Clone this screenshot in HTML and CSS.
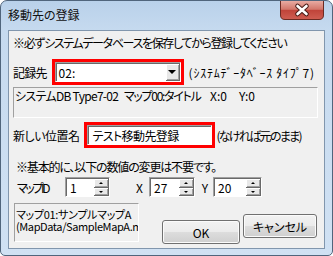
FILE: index.html
```html
<!DOCTYPE html>
<html lang="ja">

<head>
    <meta charset="UTF-8">
    <title>移動先の登録</title>
    <link rel="stylesheet" href="styles.css">
</head>

<body>
    <div class="window">
        <div class="titlebar">
            <span class="title">移動先の登録</span>
            <svg class="close" width="44" height="19" viewBox="0 0 44 19">
                <defs>
                    <linearGradient id="closeGrad" x1="0" y1="0" x2="0" y2="1">
                        <stop offset="0" stop-color="#e8aba2"/>
                        <stop offset="0.45" stop-color="#d2766a"/>
                        <stop offset="0.5" stop-color="#c0443a"/>
                        <stop offset="1" stop-color="#cf5e52"/>
                    </linearGradient>
                </defs>
                <path d="M0.5 0 V14 Q0.5 18.5 5 18.5 H39 Q43.5 18.5 43.5 14 V0" fill="url(#closeGrad)" stroke="#6b2a22"/>
                <path d="M17.5 5 L26.5 13 M26.5 5 L17.5 13" stroke="#4a1d18" stroke-width="4.6" stroke-linecap="round"/>
                <path d="M17.5 5 L26.5 13 M26.5 5 L17.5 13" stroke="#ffffff" stroke-width="2.6" stroke-linecap="round"/>
            </svg>
        </div>

        <div class="client">
            <p class="note note-top">※必ずシステムデータベースを保存してから登録してください</p>

            <div class="row row-db">
                <span class="label">記録先</span>
                <div class="redbox">
                    <div class="combo">
                        <span class="combo-val">02:</span>
                        <span class="combo-btn"><i class="arrow-down"></i></span>
                    </div>
                </div>
                <span class="hint hint-db">(ｼｽﾃﾑﾃﾞｰﾀﾍﾞｰｽ ﾀｲﾌﾟ7)</span>
            </div>

            <div class="info info-db">
                <span class="seg seg-db">システムDB Type7-02</span>
                <span class="seg seg-map">マップ00:タイトル</span>
                <span class="seg seg-x">X:0</span>
                <span class="seg">Y:0</span>
            </div>

            <div class="row row-name">
                <span class="label label-name">新しい位置名</span>
                <div class="redbox">
                    <div class="textbox">テスト移動先登録</div>
                </div>
                <span class="hint hint-name">(なければ元のまま)</span>
            </div>

            <p class="note note-mid">※基本的に、以下の数値の変更は不要です。</p>

            <div class="row row-spin">
                <span class="spin-label">マップID</span>
                <div class="spin spin-id">
                    <span class="spin-val">1</span>
                    <span class="spin-btns"><i class="up"></i><i class="down"></i></span>
                </div>
                <span class="axis axis-x">X</span>
                <div class="spin spin-x">
                    <span class="spin-val">27</span>
                    <span class="spin-btns"><i class="up"></i><i class="down"></i></span>
                </div>
                <span class="axis axis-y">Y</span>
                <div class="spin spin-y">
                    <span class="spin-val">20</span>
                    <span class="spin-btns"><i class="up"></i><i class="down"></i></span>
                </div>
            </div>

            <div class="bottom">
                <div class="info info-map">
                    <div class="map-name">マップ01:サンプルマップA</div>
                    <div class="map-file">(MapData/SampleMapA.m</div>
                </div>
                <button class="btn btn-ok">OK</button>
                <button class="btn btn-cancel">キャンセル</button>
            </div>
        </div>
    </div>
</body>

</html>
```

FILE: styles.css
```css
body {
    margin: 0;
    font-family: "Noto Sans CJK JP", "Noto Sans", sans-serif;
    font-size: 12px;
    font-feature-settings: "palt";
    color: #000;
}

.window {
    width: 333px;
    height: 256px;
    box-sizing: border-box;
    border: 1px solid #50657c;
    border-radius: 7px 7px 5px 5px;
    background: linear-gradient(#b9d1ea, #c6daef 30px, #d0e1f3);
    padding: 0 7px 6px;
    display: flex;
    flex-direction: column;
    overflow: hidden;
}

.titlebar {
    height: 29px;
    flex: none;
    display: flex;
    justify-content: space-between;
    align-items: flex-start;
}

.title {
    padding-top: 7px;
    line-height: 14px;
    color: #111;
}

.close {
    display: block;
    margin-right: 1px;
}

.client {
    flex: 1;
    border: 1px solid #8196ad;
    background: #f0f0f0;
    padding: 0 4px;
}

.note {
    margin: 0;
    line-height: 14px;
    white-space: nowrap;
}

.note-top {
    margin-top: 5px;
    letter-spacing: -1.35px;
}

.note-mid {
    margin-top: 12px;
    padding-left: 3px;
    letter-spacing: -1.15px;
}

.row {
    display: flex;
    align-items: center;
    white-space: nowrap;
}

.label {
    letter-spacing: -0.8px;
}

.label-name {
    letter-spacing: -0.5px;
}

.row-db {
    margin-top: 9px;
    gap: 5px;
}

.row-name {
    margin-top: 4px;
    gap: 5px;
}

.hint-db {
    margin-left: 0;
    letter-spacing: 0.75px;
}

.hint-name {
    margin-left: -4px;
    letter-spacing: -1.7px;
}

.redbox {
    border: 3px solid #ff0000;
}

.combo {
    width: 126px;
    height: 20px;
    box-sizing: border-box;
    display: flex;
    background: #fff;
    border: 1px solid;
    border-color: #a0a0a0 #ffffff #ffffff #a0a0a0;
    box-shadow: inset 1px 1px 0 #696969;
}

.combo-val {
    flex: 1;
    padding: 1px 0 0 3px;
    line-height: 17px;
}

.combo-btn {
    width: 14px;
    margin: 1px 0 0;
    box-sizing: border-box;
    background: #e8e8e8;
    border-right: 1px solid #696969;
    border-bottom: 1px solid #696969;
    box-shadow: inset 1px 1px 0 #fff, inset -1px -1px 0 #a0a0a0;
    display: flex;
    align-items: center;
    justify-content: center;
}

.arrow-down {
    display: block;
    border-left: 4px solid transparent;
    border-right: 4px solid transparent;
    border-top: 4px solid #000;
}

.textbox {
    width: 125px;
    height: 20px;
    box-sizing: border-box;
    background: #fff;
    border: 1px solid;
    border-color: #a0a0a0 #ffffff #ffffff #a0a0a0;
    box-shadow: inset 1px 1px 0 #696969;
    padding: 1px 0 0 4px;
    line-height: 17px;
    letter-spacing: -0.6px;
}

.info {
    box-sizing: border-box;
    border: 1px solid;
    border-color: #a0a0a0 #ffffff #ffffff #a0a0a0;
    background: #f0f0f0;
    white-space: nowrap;
    overflow: hidden;
}

.info-db {
    margin-top: 2px;
    width: 305px;
    height: 31px;
    padding: 1px 0 0 1px;
    line-height: 14px;
    display: flex;
}

.seg {
    flex: none;
}

.seg-db {
    width: 109px;
    letter-spacing: -0.7px;
}

.seg-map {
    width: 86px;
    letter-spacing: -1.3px;
}

.seg-x {
    width: 29px;
}

.row-spin {
    margin-top: 3px;
    height: 20px;
}

.spin-label {
    width: 48px;
    padding-left: 4px;
    letter-spacing: -2.4px;
}

.axis {
    text-align: center;
}

.axis-x {
    width: 39px;
    padding-left: 20px;
    box-sizing: border-box;
}

.axis-y {
    width: 18px;
    padding-left: 2px;
    box-sizing: border-box;
}

.spin {
    height: 20px;
    box-sizing: border-box;
    display: flex;
    background: #fff;
    border: 1px solid;
    border-color: #a0a0a0 #ffffff #ffffff #a0a0a0;
    box-shadow: inset 1px 1px 0 #696969;
}

.spin-id {
    width: 45px;
}

.spin-x {
    width: 46px;
}

.spin-y {
    width: 49px;
}

.spin-val {
    flex: 1;
    padding: 1px 0 0 4px;
    line-height: 17px;
}

.spin-btns {
    width: 15px;
    display: flex;
    flex-direction: column;
    padding: 1px 0 0;
}

.spin-btns i {
    flex: 1;
    box-sizing: border-box;
    background: #e8e8e8;
    border-right: 1px solid #696969;
    border-bottom: 1px solid #696969;
    box-shadow: inset 1px 1px 0 #fff, inset -1px -1px 0 #a0a0a0;
    position: relative;
}

.spin-btns i::after {
    content: "";
    position: absolute;
    left: 5px;
    top: 3px;
    border-left: 2px solid transparent;
    border-right: 2px solid transparent;
}

.spin-btns .up::after {
    border-bottom: 2px solid #000;
}

.spin-btns .down::after {
    border-top: 2px solid #000;
}

.bottom {
    margin-top: 6px;
    display: flex;
    align-items: flex-start;
}

.info-map {
    margin-left: 1px;
    width: 125px;
    height: 39px;
    padding: 4px 0 0 1px;
    font-size: 11px;
    line-height: 12px;
}

.map-name {
    letter-spacing: -0.3px;
}

.map-file {
    letter-spacing: -0.4px;
}

.btn {
    font-family: inherit;
    font-size: 12px;
    font-feature-settings: "palt";
    color: #000;
    height: 24px;
    padding: 0;
    border: 1px solid #707070;
    border-radius: 3px;
    background: linear-gradient(#f2f2f2, #ebebeb 50%, #dddddd 50%, #cfcfcf);
    box-shadow: inset 0 0 0 1px #fbfbfb;
}

.btn-ok {
    width: 78px;
    margin: 17px 0 0 23px;
}

.btn-cancel {
    width: 74px;
    margin: 11px 0 0 3px;
}
```
